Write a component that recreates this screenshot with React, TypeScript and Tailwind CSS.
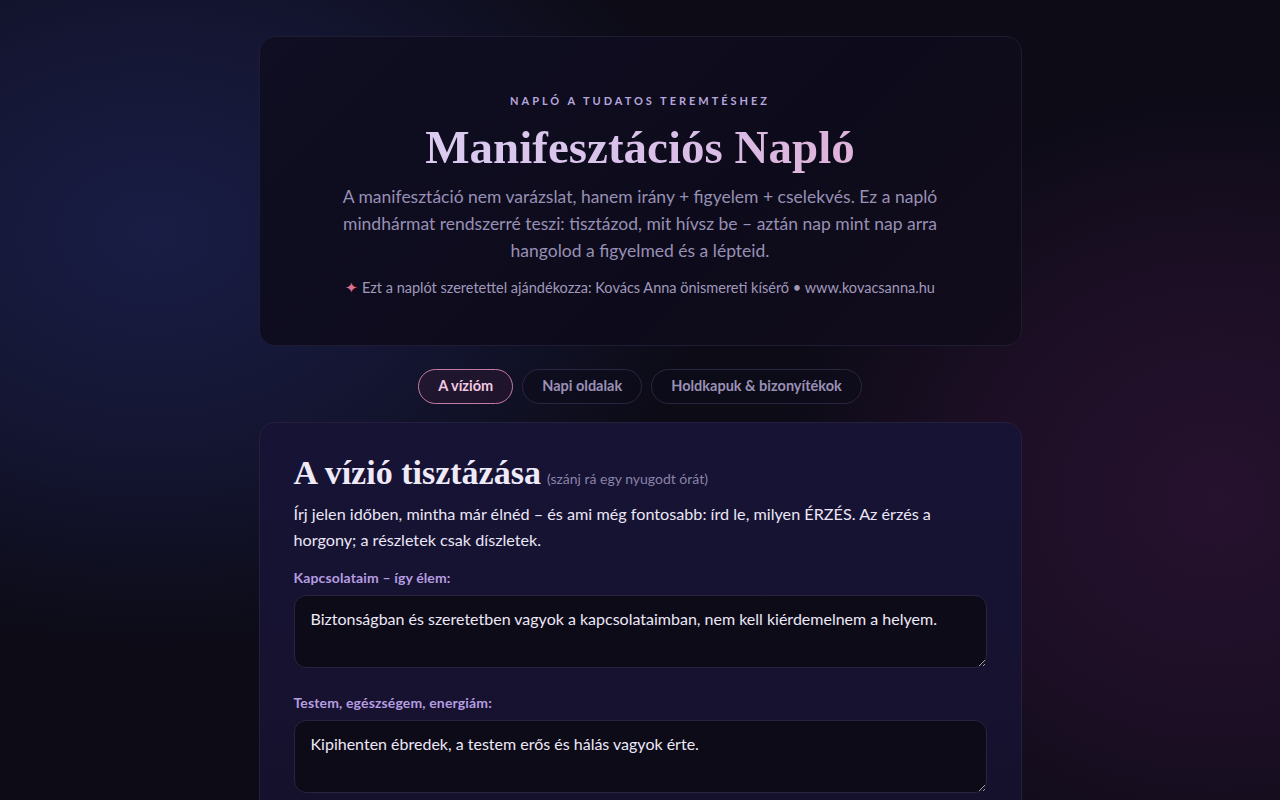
const sans = "font-['Lato','Inter',sans-serif]";
const serif = "font-['Liberation_Serif','DejaVu_Serif',serif]";

const stars = [
  { x: 335, y: 98 },
  { x: 914, y: 104 },
  { x: 654, y: 122 },
  { x: 793, y: 258 },
  { x: 620, y: 290 },
];

const tabs = ["A vízióm", "Napi oldalak", "Holdkapuk & bizonyítékok"];

const fields = [
  {
    label: "Kapcsolataim – így élem:",
    value:
      "Biztonságban és szeretetben vagyok a kapcsolataimban, nem kell kiérdemelnem a helyem.",
  },
  {
    label: "Testem, egészségem, energiám:",
    value: "Kipihenten ébredek, a testem erős és hálás vagyok érte.",
  },
];

export default function App() {
  return (
    <div
      className={`relative min-h-screen overflow-hidden bg-[#0c0b16] ${sans}`}
    >
      {/* background glows */}
      <div className="pointer-events-none absolute inset-0 bg-[radial-gradient(ellipse_700px_520px_at_12%_28%,#191d45_0%,rgba(25,29,69,0.55)_45%,transparent_80%)]" />
      <div className="pointer-events-none absolute inset-0 bg-[radial-gradient(ellipse_560px_520px_at_95%_60%,#26112e_0%,rgba(38,17,46,0.6)_45%,transparent_80%)]" />

      {stars.map((s, i) => (
        <span
          key={i}
          className="absolute h-[2px] w-[2px] rounded-full bg-white/80"
          style={{ left: s.x, top: s.y }}
        />
      ))}

      <div className="relative mx-auto w-[763px] pt-9">
        {/* header */}
        <header className="rounded-2xl border border-[#1e1b32] bg-[linear-gradient(135deg,#0f0e22_0%,#0d0b1b_60%,#120c1c_100%)] px-10 pb-[47px] pt-[56px] text-center">
          <p className="text-[11px] font-bold tracking-[0.27em] text-[#b7a6dd]">
            NAPLÓ A TUDATOS TEREMTÉSHEZ
          </p>
          <h1
            className={`${serif} mt-[10px] bg-[linear-gradient(90deg,#dcd2f6_0%,#d9bfe8_55%,#e2a9cf_100%)] bg-clip-text text-[47px] font-bold leading-[54px] text-transparent`}
          >
            Manifesztációs Napló
          </h1>
          <p className="mx-auto mt-[9px] w-[620px] text-[17.5px] leading-[27px] text-[#9890b4]">
            A manifesztáció nem varázslat, hanem irány + figyelem + cselekvés.
            Ez a napló mindhármat rendszerré teszi: tisztázod, mit hívsz be –
            aztán nap mint nap arra hangolod a figyelmed és a lépteid.
          </p>
          <p className="mt-[14px] text-[14.5px] leading-5 text-[#a199bb]">
            <span className="text-[#e0708f]">✦</span> Ezt a naplót szeretettel
            ajándékozza: Kovács Anna önismereti kísérő • www.kovacsanna.hu
          </p>
        </header>

        {/* tabs */}
        <nav className="mt-[23px] flex justify-center gap-[9px]">
          {tabs.map((t, i) => (
            <button
              key={t}
              className={
                i === 0
                  ? "h-[35px] rounded-full border border-[#c47aa3] bg-[#2a1730]/60 px-[19px] text-[14.5px] font-bold text-[#f2c9e2]"
                  : "h-[35px] rounded-full border border-[#2a2640] bg-[#0e0c1a]/60 px-[19px] text-[14.5px] font-bold text-[#9a90b6]"
              }
            >
              {t}
            </button>
          ))}
        </nav>

        {/* main card */}
        <main className="mt-[18px] rounded-2xl border border-[#231f3d] bg-[linear-gradient(180deg,#171335_0%,#15112c_100%)] px-[34px] pb-10 pt-[30px]">
          <h2 className="flex items-baseline gap-[6px]">
            <span
              className={`${serif} text-[34px] font-bold leading-[40px] text-[#efeaf8]`}
            >
              A vízió tisztázása
            </span>
            <span className="text-[14px] text-[#8b83a8]">
              (szánj rá egy nyugodt órát)
            </span>
          </h2>
          <p className="mt-[8px] text-[16.2px] leading-[26px] text-[#ebe7f6]">
            Írj jelen időben, mintha már élnéd – és ami még fontosabb: írd le,
            milyen ÉRZÉS. Az érzés a horgony; a részletek csak díszletek.
          </p>

          {fields.map((f, i) => (
            <div key={f.label} className={i === 0 ? "mt-[15px]" : "mt-[25px]"}>
              <label className="block text-[14px] font-bold leading-5 tracking-[0.01em] text-[#b59de0]">
                {f.label}
              </label>
              <textarea
                defaultValue={f.value}
                className="mt-[7px] block h-[73px] w-full resize-y rounded-xl border border-[#29243f] bg-[#0e0b19] px-4 py-[11px] text-[16px] leading-[24px] text-[#ece8f7] outline-none"
              />
            </div>
          ))}
        </main>
      </div>
    </div>
  );
}
